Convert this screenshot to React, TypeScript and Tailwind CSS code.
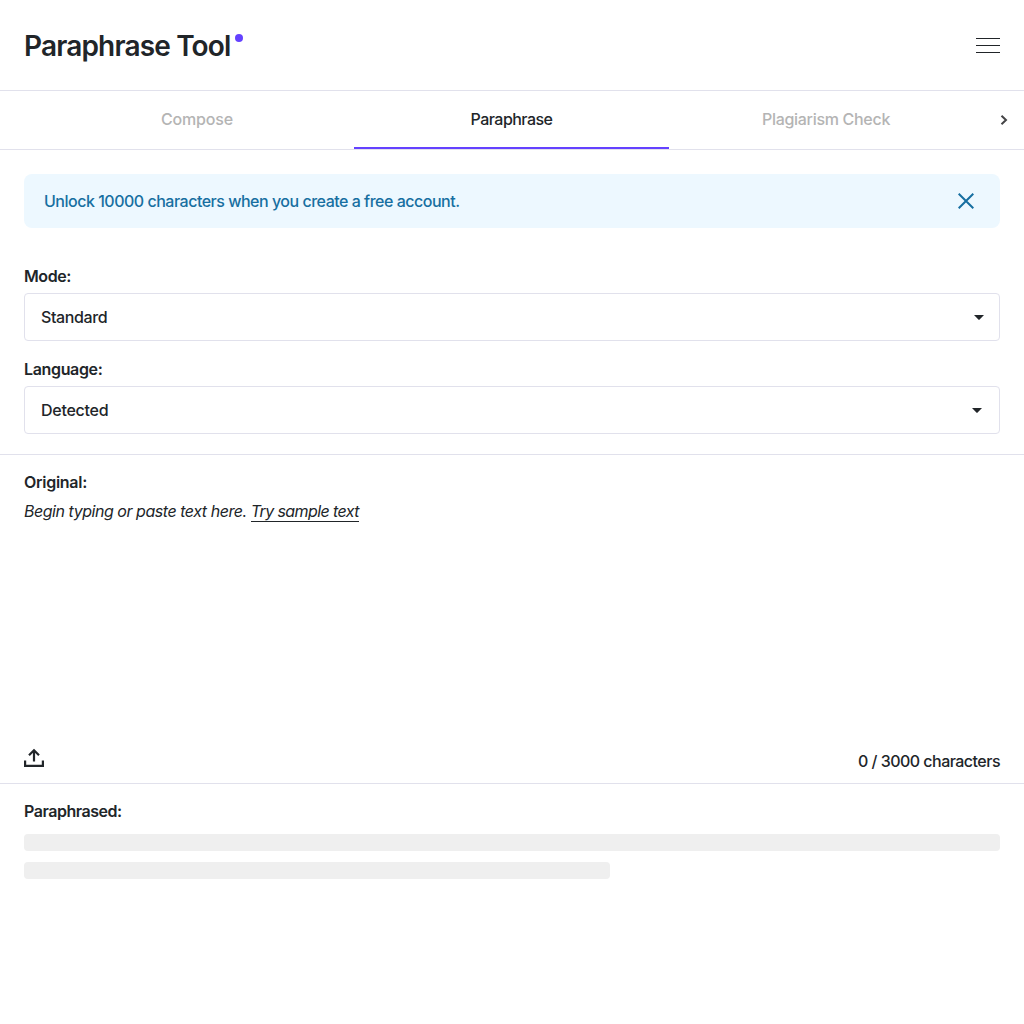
function Caret({ className }: { className: string }) {
  return (
    <svg className={className} width="10" height="5" viewBox="0 0 10 5" fill="#212529">
      <path d="M0 0h10L5.6 4.6a.8.8 0 0 1-1.2 0z" />
    </svg>
  );
}

function Field({
  label,
  labelClass,
  value,
  valueClass,
  caretClass,
}: {
  label: string;
  labelClass: string;
  value: string;
  valueClass: string;
  caretClass: string;
}) {
  return (
    <div>
      <div className="flex h-6 items-center">
        <label className={labelClass}>{label}</label>
      </div>
      <button className="mt-[5px] flex h-12 w-full items-center justify-between rounded border border-[#e1e1ec] bg-white pl-4">
        <span className={valueClass}>{value}</span>
        <Caret className={caretClass} />
      </button>
    </div>
  );
}

export default function App() {
  return (
    <div className="flex h-[1024px] flex-col overflow-hidden bg-white font-['Inter',sans-serif] text-base font-[450] whitespace-nowrap text-[#212529]">
      <header className="flex h-[91px] shrink-0 items-center justify-between border-b border-[#e1e1ec] px-6">
        <div className="flex items-start">
          <h1 className="pt-px text-[28px] leading-[42px] font-semibold tracking-[-0.84px]">Paraphrase Tool</h1>
          <span className="mt-[10px] ml-1 size-2 rounded-full bg-[#6442ff]" />
        </div>
        <button className="flex w-6 flex-col gap-1.5" aria-label="Menu">
          <span className="h-px bg-[#212529]" />
          <span className="h-px bg-[#212529]" />
          <span className="h-px bg-[#212529]" />
        </button>
      </header>

      <nav className="flex h-[59px] shrink-0 border-b border-[#e1e1ec]">
        <div className="w-[39px]" />
        <div className="grid flex-1 grid-cols-3 font-medium">
          <button className="pb-0.5 pl-px tracking-[-0.17px] text-[#b4b4b4]">Compose</button>
          <button className="relative pb-0.5 tracking-[-0.52px]">
            Paraphrase
            <span className="absolute inset-x-0 bottom-0 h-0.5 bg-[#6442ff]" />
          </button>
          <button className="pr-px pb-0.5 tracking-[-0.3px] text-[#b4b4b4]">Plagiarism Check</button>
        </div>
        <div className="flex w-10 items-center justify-center">
          <svg className="mb-px" width="8" height="12" viewBox="0 0 8 12" fill="none" stroke="#444446" strokeWidth="2">
            <path d="M1.5 1.7 6 6 1.5 10.3" />
          </svg>
        </div>
      </nav>

      <section className="flex h-[305px] shrink-0 flex-col border-b border-[#e1e1ec] px-6 pt-6">
        <div className="mb-9 flex h-[54px] items-center justify-between rounded-lg bg-[#edf8ff] pr-[26px] pl-5 text-[#176fa1]">
          <span className="tracking-[-0.49px]">Unlock 10000 characters when you create a free account.</span>
          <svg width="16" height="16" viewBox="0 0 16 16" fill="none" stroke="currentColor" strokeWidth="2">
            <path d="M.7.7 15.3 15.3M15.3.7.7 15.3" />
          </svg>
        </div>
        <div className="flex flex-col gap-4">
          <Field
            label="Mode:"
            labelClass="font-semibold tracking-[-0.41px]"
            value="Standard"
            valueClass="tracking-[-0.38px]"
            caretClass="mr-[15px]"
          />
          <Field
            label="Language:"
            labelClass="font-semibold tracking-[-0.35px]"
            value="Detected"
            valueClass="tracking-[-0.26px]"
            caretClass="mr-[17px]"
          />
        </div>
      </section>

      <section className="flex h-[329px] shrink-0 flex-col border-b border-[#e1e1ec] px-6 pt-[15px]">
        <h2 className="leading-6 font-semibold tracking-[-0.27px]">Original:</h2>
        <div className="mt-[5px] flex h-6 items-center gap-1 font-normal italic">
          <span className="tracking-[-0.46px]">Begin typing or paste text here.</span>
          <a className="border-b border-[#212529] pt-px leading-5 tracking-[-0.59px]">Try sample text</a>
        </div>
        <div className="mt-auto mb-2.5 flex items-center justify-between">
          <svg
            className="-mt-1.5"
            width="20"
            height="20"
            viewBox="0 0 20 20"
            fill="none"
            stroke="#212529"
            strokeWidth="2.2"
          >
            <path d="M1.1 12.5v5.4h17.8v-5.4M10 13.5V2.5M5 7.2l5-5 5 5" />
          </svg>
          <span className="leading-6 tracking-[-0.52px]">0 / 3000 characters</span>
        </div>
      </section>

      <section className="px-6 pt-[15px]">
        <h2 className="leading-6 font-semibold tracking-[-0.46px]">Paraphrased:</h2>
        <div className="mt-[11px] flex flex-col gap-[11px]">
          <div className="h-[17px] rounded bg-[#efefef]" />
          <div className="h-[17px] w-[586px] rounded bg-[#efefef]" />
        </div>
      </section>
    </div>
  );
}
